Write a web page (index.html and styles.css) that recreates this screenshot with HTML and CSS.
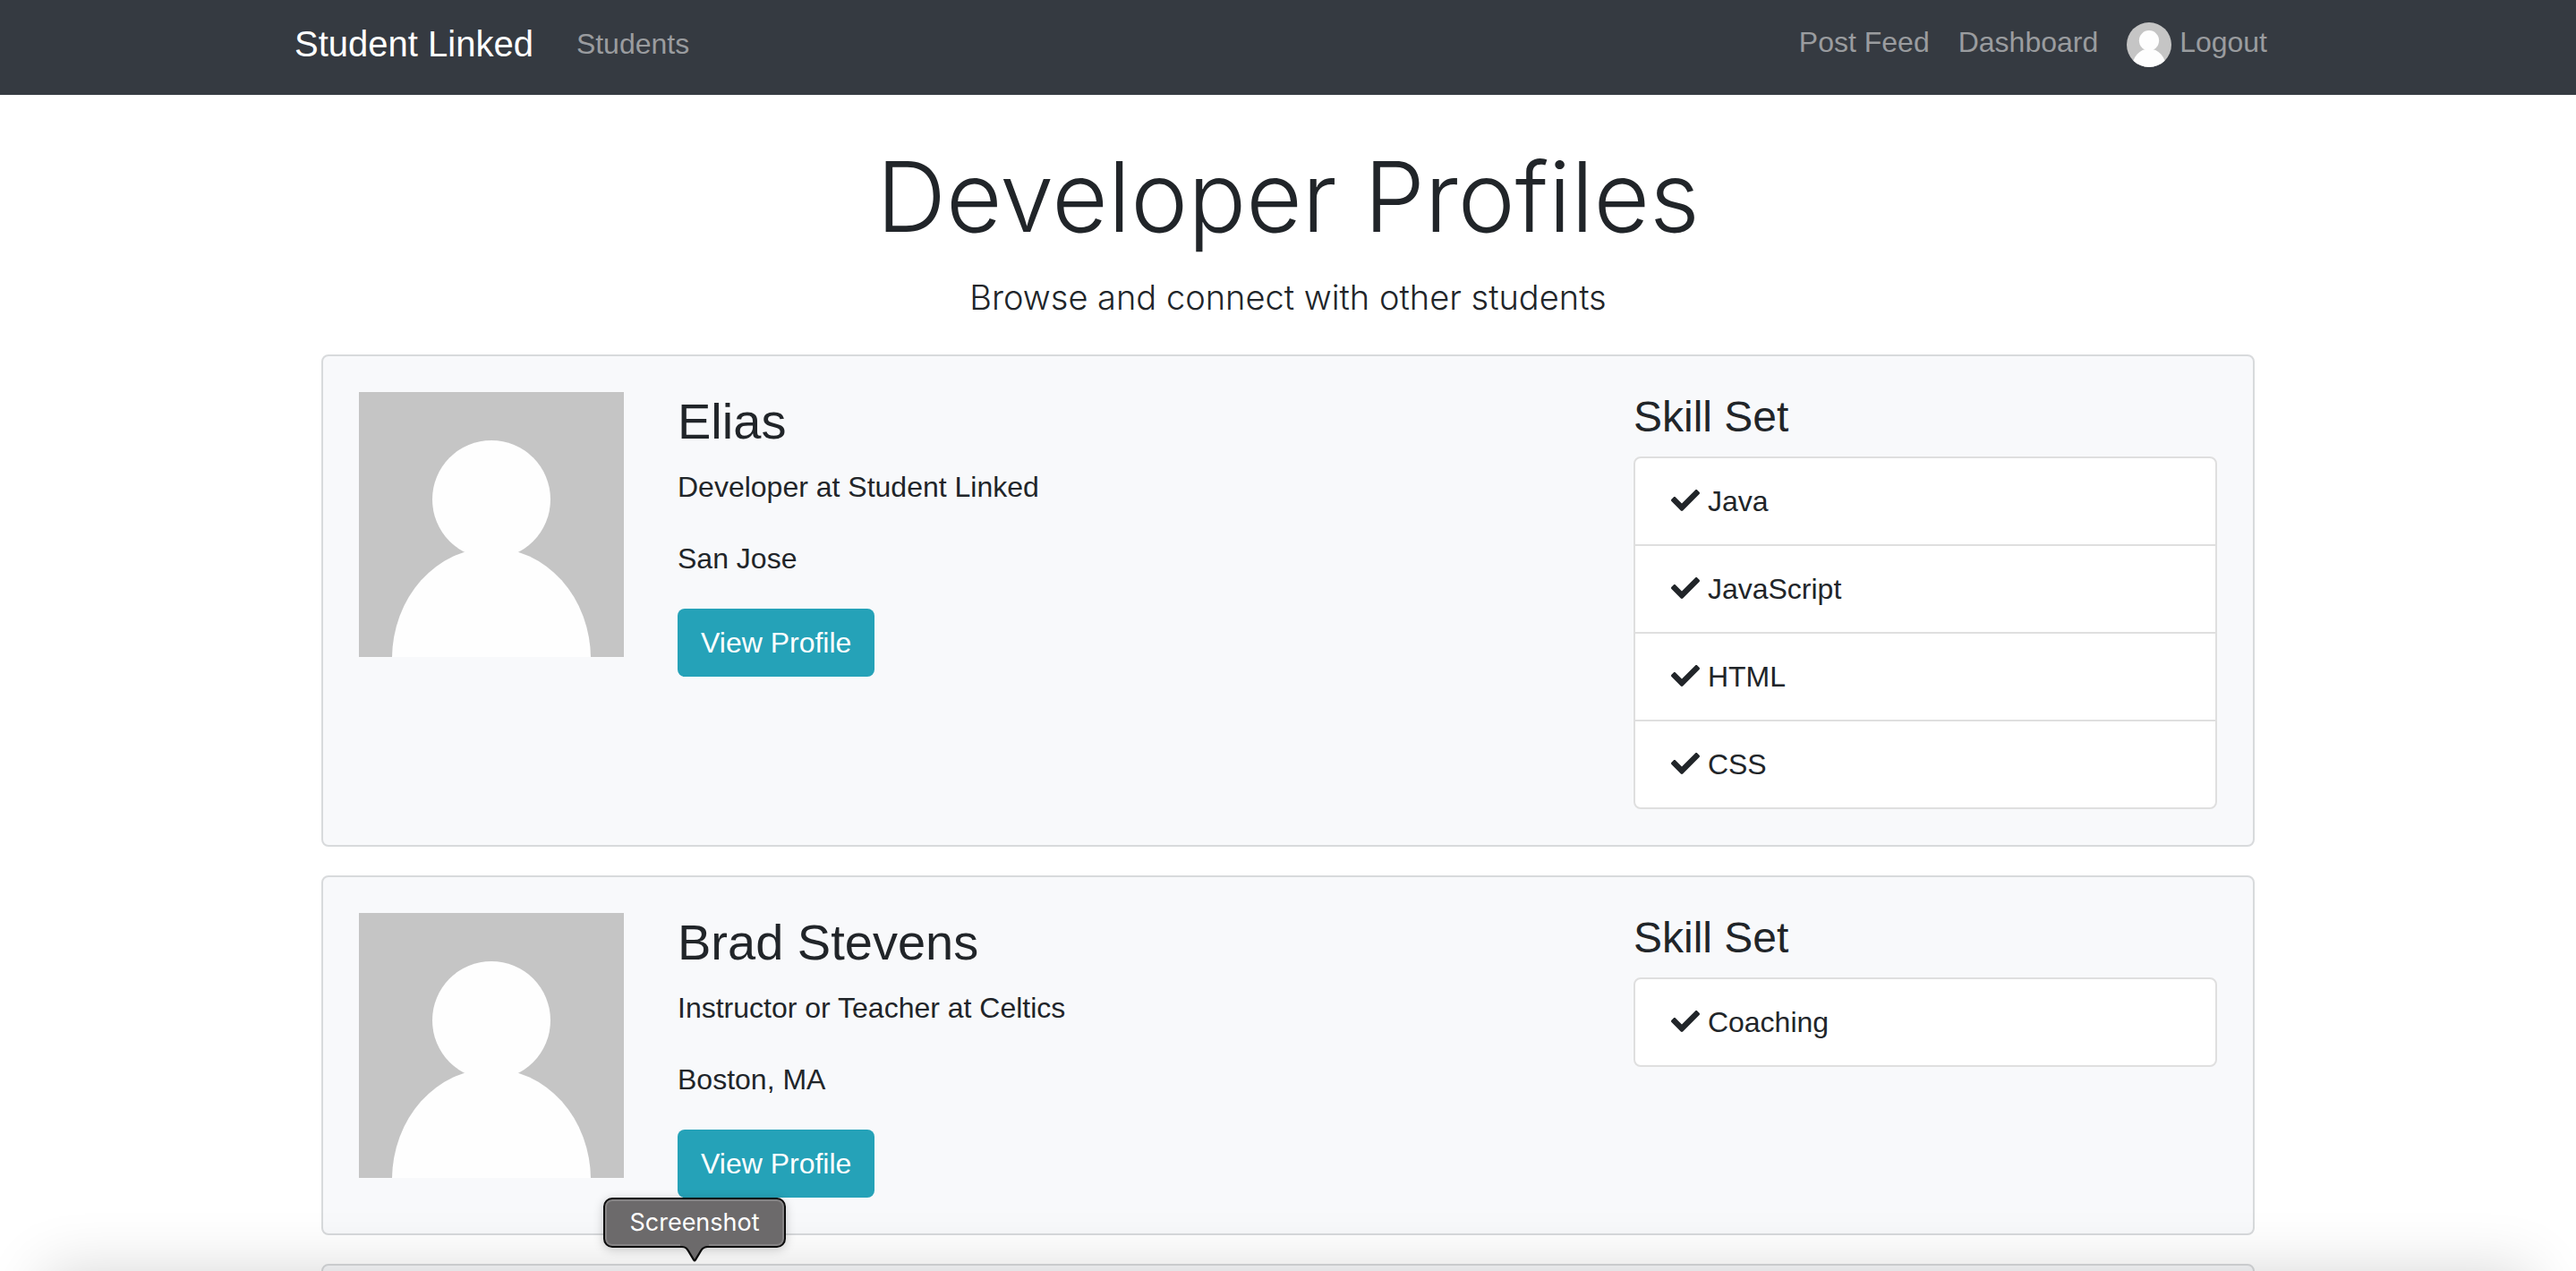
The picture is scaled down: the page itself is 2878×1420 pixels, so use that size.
FILE: index.html
```html
<!DOCTYPE html>
<html lang="en">
<head>
  <meta charset="utf-8">
  <title>Student Linked</title>
  <link rel="stylesheet" href="styles.css">
</head>
<body>
  <svg class="sprite" aria-hidden="true">
    <symbol id="avatar" viewBox="0 0 296 296">
      <rect width="296" height="296" fill="#c5c5c5"/>
      <circle cx="148" cy="120" r="66" fill="#fefefe"/>
      <ellipse cx="148" cy="298" rx="111" ry="124" fill="#fefefe"/>
    </symbol>
    <symbol id="check" viewBox="0 0 512 512">
      <path fill="currentColor" d="M173.898 439.404l-166.4-166.4c-9.997-9.997-9.997-26.206 0-36.204l36.203-36.204c9.997-9.998 26.207-9.998 36.204 0L192 312.69 432.095 72.596c9.997-9.997 26.207-9.997 36.204 0l36.203 36.204c9.997 9.997 9.997 26.206 0 36.204l-294.4 294.401c-9.998 9.997-26.207 9.997-36.204-.001z"/>
    </symbol>
  </svg>

  <nav class="navbar">
    <div class="container navbar-inner">
      <a class="brand" href="#">Student Linked</a>
      <a class="nav-link" href="#">Students</a>
      <div class="nav-right">
        <a class="nav-link" href="#">Post Feed</a>
        <a class="nav-link" href="#">Dashboard</a>
        <a class="nav-link" href="#"><svg class="nav-avatar"><use href="#avatar"/></svg> Logout</a>
      </div>
    </div>
  </nav>

  <main class="container profiles">
    <h1 class="title">Developer Profiles</h1>
    <p class="lead">Browse and connect with other students</p>

    <div class="profile-list">
      <article class="card">
        <svg class="photo" role="img" aria-label="Elias" viewBox="0 0 296 296"><use href="#avatar"/></svg>
        <div class="bio">
          <h3 class="name">Elias</h3>
          <p class="text">Developer at Student Linked</p>
          <p class="text">San Jose</p>
          <a class="btn" href="#">View Profile</a>
        </div>
        <div class="skills">
          <h4 class="skills-title">Skill Set</h4>
          <ul class="skill-list">
            <li class="skill"><svg class="check"><use href="#check"/></svg> Java</li>
            <li class="skill"><svg class="check"><use href="#check"/></svg> JavaScript</li>
            <li class="skill"><svg class="check"><use href="#check"/></svg> HTML</li>
            <li class="skill"><svg class="check"><use href="#check"/></svg> CSS</li>
          </ul>
        </div>
      </article>

      <article class="card">
        <svg class="photo" role="img" aria-label="Brad Stevens" viewBox="0 0 296 296"><use href="#avatar"/></svg>
        <div class="bio">
          <h3 class="name">Brad Stevens</h3>
          <p class="text">Instructor or Teacher at Celtics</p>
          <p class="text">Boston, MA</p>
          <a class="btn" href="#">View Profile</a>
        </div>
        <div class="skills">
          <h4 class="skills-title">Skill Set</h4>
          <ul class="skill-list">
            <li class="skill"><svg class="check"><use href="#check"/></svg> Coaching</li>
          </ul>
        </div>
      </article>

      <article class="card"></article>
    </div>
  </main>

  <div class="dock-shadow"></div>
  <div class="tooltip" role="tooltip">Screenshot
    <svg class="tooltip-arrow" viewBox="0 0 36 20"><path d="M2 0H34V4C29 4 28 5 26 8L20 18Q18 21 16 18L10 8C8 5 7 4 2 4Z" fill="#0c0c0c"/><path d="M2 0H34V2C28 2 26 4 24 7L18 17L12 7C10 4 8 2 2 2Z" fill="#6c6a6b"/></svg>
  </div>
</body>
</html>
```
FILE: styles.css
```css
* {
  box-sizing: border-box;
}

html {
  overflow: hidden;
}

body {
  position: relative;
  height: 100vh;
  margin: 0;
  overflow: hidden;
  background: #fff;
  color: #212529;
  font-family: "Liberation Sans", Arial, sans-serif;
  font-size: 32px;
  line-height: 48px;
}

h1, h3, h4, p, ul {
  margin: 0;
  padding: 0;
  font-weight: 400;
}

a {
  text-decoration: none;
}

.sprite {
  position: absolute;
  width: 0;
  height: 0;
}

.container {
  max-width: 2280px;
  margin: 0 auto;
  padding: 0 30px;
}

/* Navigation bar */
.navbar {
  padding: 16px 0 24px;
  background: #353a41;
}

.navbar-inner {
  display: flex;
  align-items: center;
  min-height: 66px;
}

.brand {
  margin-right: 32px;
  color: #fff;
  font-size: 40px;
  line-height: 60px;
}

.nav-link {
  padding: 0 16px;
  color: #9a9c9f;
}

.nav-right {
  display: flex;
  align-items: baseline;
  margin-left: auto;
}

.nav-avatar {
  width: 50px;
  height: 50px;
  border-radius: 50%;
  vertical-align: middle;
}

/* Heading */
.profiles {
  padding-top: 48px;
}

.title {
  margin-bottom: 16px;
  font-family: Inter, "Liberation Sans", sans-serif;
  font-size: 108px;
  font-weight: 300;
  line-height: 132px;
  text-align: center;
}

.lead {
  margin-bottom: 34px;
  font-family: Inter, "Liberation Sans", sans-serif;
  font-size: 38px;
  font-weight: 300;
  line-height: 60px;
  text-align: center;
}

/* Profile cards */
.profile-list {
  display: flex;
  flex-direction: column;
  gap: 32px;
  padding: 0 30px;
}

.card {
  display: grid;
  grid-template-columns: repeat(12, minmax(0, 1fr));
  column-gap: 60px;
  align-items: start;
  padding: 40px;
  border: 2px solid #d8dadc;
  border-radius: 8px;
  background: #f8f9fb;
}

.photo {
  display: block;
  grid-column: span 2;
  width: 100%;
}

.bio {
  grid-column: span 6;
}

.skills {
  grid-column: span 4;
}

.name {
  margin-bottom: 16px;
  font-size: 56px;
  line-height: 66px;
}

.text {
  margin-bottom: 32px;
}

.btn {
  display: block;
  width: fit-content;
  padding: 14px 26px;
  border-radius: 8px;
  background: #25a2b8;
  color: #fff;
}

.skills-title {
  margin-bottom: 16px;
  font-size: 48px;
  line-height: 56px;
}

.skill-list {
  border: 2px solid #dfdfdf;
  border-radius: 8px;
  background: #fff;
  list-style: none;
}

.skill {
  padding: 24px 40px;
}

.skill + .skill {
  border-top: 2px solid #dfdfdf;
}

.check {
  width: 32px;
  height: 32px;
  vertical-align: -4px;
}

/* Desktop overlays */
.dock-shadow {
  position: absolute;
  top: 100%;
  right: 50px;
  left: 50px;
  height: 200px;
  box-shadow: 0 0 64px rgba(0, 0, 0, 0.16);
}

.tooltip {
  position: absolute;
  bottom: 26px;
  left: 674px;
  width: 204px;
  padding: 4px 0;
  border: 2px solid #0c0c0c;
  border-radius: 10px;
  background: #6c6a6b;
  box-shadow: inset 0 0 0 2px #858384, 0 2px 12px rgba(0, 0, 0, 0.2);
  color: #fff;
  font-family: Inter, "Liberation Sans", sans-serif;
  font-size: 27px;
  line-height: 44px;
  text-align: center;
}

.tooltip-arrow {
  position: absolute;
  top: 50px;
  left: 82px;
  width: 36px;
  height: 20px;
}
```
